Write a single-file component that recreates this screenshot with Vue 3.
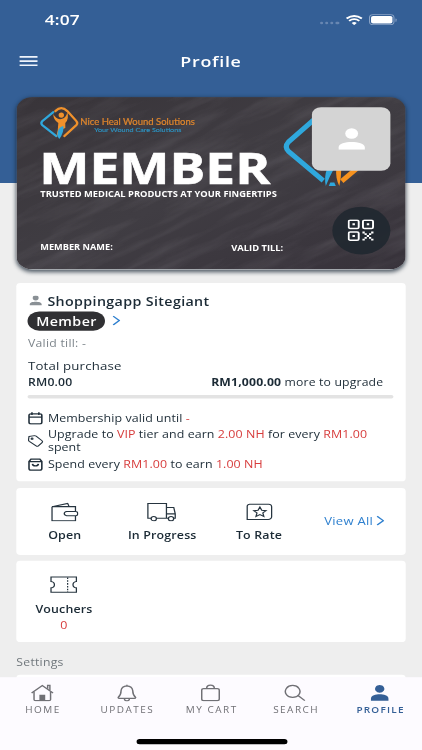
<template>
  <div class="viewport">
  <div class="screen">
    <header class="header">
      <div class="status-bar">
        <span class="time">4:07</span>
        <div class="status-icons">
          <span class="dots"><i v-for="n in 4" :key="n"></i></span>
          <svg class="wifi" viewBox="0 0 17 12" preserveAspectRatio="none">
            <path d="M8.5 12 L11 9.4 Q8.500 7.400 6 9.400Z" fill="#fff" />
            <path d="M3.500 6.900 Q8.500 2.900 13.500 6.900 M1 4.100 Q8.500 -1.900 16 4.100" fill="none" stroke="#fff" stroke-width="2.1" />
          </svg>
          <span class="battery"><i></i></span>
        </div>
      </div>
      <div class="title-bar">
        <svg class="menu" viewBox="0 0 18 12"><path d="M0 1h18 M0 6h18 M0 11h18" /></svg>
        <h1>Profile</h1>
      </div>
    </header>

    <section class="member-card">
      <svg class="card-art" viewBox="16 97 390 172" preserveAspectRatio="none">
        <defs>
          <linearGradient id="board" x1="0" y1="0" x2="1" y2="1">
            <stop offset="0" stop-color="#383439" />
            <stop offset="0.5" stop-color="#403d43" />
            <stop offset="1" stop-color="#37323a" />
          </linearGradient>
          <filter id="chalk" x="0" y="0" width="100%" height="100%">
            <feTurbulence type="fractalNoise" baseFrequency="0.012 0.09" numOctaves="5" seed="8" />
            <feColorMatrix values="0 0 0 0 0.8  0 0 0 0 0.78  0 0 0 0 0.84  0.9 0 0 0 -0.34" />
          </filter>
        </defs>
        <rect x="16" y="97" width="390" height="172" fill="url(#board)" />
        <g transform="rotate(-25 211 183)">
          <rect x="-20" y="-20" width="460" height="410" filter="url(#chalk)" opacity="0.2" />
        </g>

        <g fill="none" stroke-width="2.200" stroke-linecap="round" stroke-linejoin="round">
          <path d="M53 112 L42 121 Q40 123 42 125 L56 136" stroke="#2fa8dd" />
          <path d="M55 111 Q61 105 67 111 L76 121 Q78 123 76 125 L64 136" stroke="#f0912b" />
        </g>
        <circle cx="61" cy="115" r="2.700" fill="#f0912b" />
        <path d="M53 114 Q56 120 61 119 Q66 118 67 112 Q69 119 65 123 L65 128 Q60 129 56 137 Q58 129 58 123 Q53 120 53 114Z" fill="#f0912b" />
        <path d="M57 136 Q57 127 63 126 Q64 132 59 139Z" fill="#2fa8dd" />
        <g font-family="'Lato', 'Open Sans', sans-serif">
          <text x="80" y="124.900" font-size="8.800" font-weight="400" fill="#e0862c" stroke="#e0862c" stroke-width="0.2" textLength="114.500" lengthAdjust="spacingAndGlyphs">Nice Heal Wound Solutions</text>
          <text x="94" y="132.200" font-size="6.400" font-weight="400" fill="#2d93c2" stroke="#2d93c2" stroke-width="0.150" textLength="87" lengthAdjust="spacingAndGlyphs">Your Wound Care Solutions</text>
        </g>

        <path d="M320 114 L288 142 Q284 146.500 288 151 L323 180.500" fill="none" stroke="#2fa8dd" stroke-width="5" />
        <path d="M341.500 181 L370 157" fill="none" stroke="#f7921e" stroke-width="5" />
        <path d="M327 168 L334 168 Q329 177 325.500 186 Q323.500 177 327 168Z" fill="#2fa8dd" />
        <path d="M336 168 L341 168 Q341 178 339 186 Q335 178 336 168Z" fill="#f7921e" />
        <path d="M330 182.500 L334 182.500 L335.500 186 L328.500 186Z" fill="#2fa8dd" />

        <g font-family="'Open Sans', sans-serif" fill="#fff">
          <text x="39" y="183.500" font-size="42.500" font-weight="700" stroke="#fff" stroke-width="0.600" textLength="231" lengthAdjust="spacingAndGlyphs">MEMBER</text>
          <text x="40" y="196.500" font-size="8" font-weight="700" textLength="236.500" lengthAdjust="spacingAndGlyphs">TRUSTED MEDICAL PRODUCTS AT YOUR FINGERTIPS</text>
          <text x="40" y="249.500" font-size="8" font-weight="700" textLength="72.500" lengthAdjust="spacingAndGlyphs">MEMBER NAME:</text>
          <text x="231" y="250.500" font-size="8" font-weight="700" textLength="52" lengthAdjust="spacingAndGlyphs">VALID TILL:</text>
        </g>
      </svg>
      <div class="avatar">
        <svg viewBox="0 0 26 26"><circle cx="13" cy="6.500" r="6.300" /><path d="M0 26 V23 C0 18.500 7 16.500 13 16.500 S26 18.500 26 23 V26Z" /></svg>
      </div>
      <div class="qr">
        <svg viewBox="0 0 25 25">
          <g fill="none" stroke="#fff" stroke-width="1.800">
            <rect x="1" y="1" width="9.500" height="9.500" rx="1.500" />
            <rect x="14.500" y="1" width="9.500" height="9.500" rx="1.500" />
            <rect x="1" y="14.500" width="9.500" height="9.500" rx="1.500" />
          </g>
          <path fill="#fff" d="M4.600 4.600h2.300v2.300h-2.300z M18.100 4.600h2.300v2.300h-2.300z M4.600 18.100h2.300v2.300h-2.300z M14 14h2.200v2.200h-2.200z M22.200 14h2.200v2.200h-2.200z M18.100 18.100h2.200v2.200h-2.200z M14 22.200h2.200v2.200h-2.200z M22.200 22.200h2.200v2.200h-2.200z M16 16h2.100v2.100h-2.100z M20.200 16h2.100v2.100h-2.100z M16 20.200h2.100v2.100h-2.100z M20.200 20.200h2.100v2.100h-2.100z" />
        </svg>
      </div>
    </section>

    <section class="panel info">
      <div class="name-row">
        <svg class="person" viewBox="0 0 26 26"><circle cx="13" cy="6.500" r="6.300" /><path d="M0 26 V23 C0 18.500 7 16.500 13 16.500 S26 18.500 26 23 V26Z" /></svg>
        <span class="name">Shoppingapp Sitegiant</span>
      </div>
      <div class="tier-row">
        <span class="tier">Member</span>
        <svg class="chevron" viewBox="0 0 8 12"><path d="M1 0.700 L7 6 L1 11.300" /></svg>
      </div>
      <div class="valid">Valid till: -</div>
      <div class="total">Total purchase</div>
      <div class="amounts">
        <b class="spent">RM0.00</b>
        <span class="more"><b>RM1,000.00</b> more to upgrade</span>
      </div>
      <div class="progress"></div>
      <ul class="perks">
        <li>
          <svg viewBox="0 0 16 16"><path d="M3.500 2.500h9a2 2 0 0 1 2 2v8.500a2 2 0 0 1-2 2h-9a2 2 0 0 1-2-2V4.500a2 2 0 0 1 2-2z M1.500 6.500h13 M4.500 0.500v3.500 M11.500 0.500v3.500" /></svg>
          <span>Membership valid until <em>-</em></span>
        </li>
        <li class="double">
          <svg class="thin" viewBox="0 0 16 16"><path d="M1.500 2.500 L7 1.500 Q8 1.400 8.700 2 L14.700 7.800 Q15.800 9 14.700 10.200 L11 14.200 Q9.900 15.200 8.700 14.200 L1.800 8.500 Q1 7.800 1 6.800Z" /><circle cx="4.600" cy="5.200" r="0.900" /></svg>
          <span>Upgrade to <em>VIP</em> tier and earn <em>2.00 NH</em> for every <em>RM1.00</em><br>spent</span>
        </li>
        <li>
          <svg viewBox="0 0 16 16"><path d="M3.500 1.500h9l2 3v8.500a2 2 0 0 1-2 2h-9a2 2 0 0 1-2-2V4.500z M1.500 4.700h13 M5 7.500 Q5.300 10 8 10 T11 7.500" /></svg>
          <span>Spend every <em>RM1.00</em> to earn <em>1.00 NH</em></span>
        </li>
      </ul>
    </section>

    <section class="panel orders">
      <div class="cell">
        <svg class="icon" viewBox="0 0 28 24"><path d="M1 5.500h24v6 M25 17v6H1V5.500 M1 5.500 L17 1.500 L18.500 5.500 M16 11.500h9.500q1.800 0 1.800 2.700t-1.800 2.700H16q-2.500-0.500-2.500-2.700t2.500-2.700z" /></svg>
        <span>Open</span>
      </div>
      <div class="cell">
        <svg class="icon truck" viewBox="0 0 30 24"><path d="M4.300 20H1V1.500h19V20H9.700 M20 6.500h7.500l1.500 8v5.500h-1.500 M20 14.500h9 M22 20h-2" /><circle cx="7" cy="20.500" r="2.700" /><circle cx="24.700" cy="20.500" r="2.700" /></svg>
        <span>In Progress</span>
      </div>
      <div class="cell">
        <svg class="icon" viewBox="0 0 28 24"><path d="M4 2.500h19.500a3 3 0 0 1 3 3v12.500a3.500 3.500 0 0 1-3.500 3.500H1.500V5a2.500 2.500 0 0 1 2.500-2.500z M14.500 6l1.900 4 4.400.5-3.300 2.900 1 4.400-4-2.300-4 2.300 1-4.400-3.300-2.900 4.400-.5z" /></svg>
        <span>To Rate</span>
      </div>
      <div class="view-all">
        View All
        <svg class="chevron" viewBox="0 0 8 12"><path d="M1 0.700 L7 6 L1 11.300" /></svg>
      </div>
    </section>

    <section class="panel vouchers">
      <div class="cell">
        <svg class="icon" viewBox="0 0 28 24"><path d="M1 2.500h26v5.500q-3.500 0.500-3.500 4t3.500 4v5.500h-26v-5.500q3.500-0.500 3.500-4t-3.500-4z" /><path d="M18 3v18" stroke-dasharray="2 1.500" /></svg>
        <span>Vouchers</span>
        <em>0</em>
      </div>
    </section>

    <h2 class="settings-title">Settings</h2>
    <section class="panel settings"></section>

    <nav class="tabs">
      <div v-for="tab in tabs" :key="tab.label" class="tab" :class="{ active: tab.active }">
        <svg viewBox="0 0 24 22">
          <path v-for="(d, i) in tab.lines" :key="'l' + i" class="line" :d="d" />
          <path v-for="(d, i) in tab.fills" :key="'f' + i" class="fill" :d="d" />
        </svg>
        <span>{{ tab.label }}</span>
      </div>
      <div class="home-indicator"></div>
    </nav>
  </div>
  </div>
</template>

<script setup>
const tabs = [
  {
    label: 'HOME',
    lines: ['M1 11.500 L12 2 L23 11.500', 'M3.500 10v9.500q0 1.500 1.500 1.500h14q1.500 0 1.500-1.500V10', 'M17.500 6V2h2.300v6'],
    fills: ['M9 13.500h6v7.500H9z']
  },
  {
    label: 'UPDATES',
    lines: ['M12 2.500 Q6.500 3 6 8.500 C6 14 4.500 15.500 3 17 Q3 18.200 4.500 18.200H19.500Q21 18.200 21 17 C19.500 15.500 18 14 18 8.500 Q17.500 3 12 2.500z', 'M12 1v1.500', 'M9.500 19q0 2.300 2.500 2.300t2.500-2.300'],
    fills: []
  },
  {
    label: 'MY CART',
    lines: ['M5 6h14q2 0 2 2v11q0 2-2 2H5q-2 0-2-2V8q0-2 2-2z', 'M8 6q0-4.500 4-4.500t4 4.500'],
    fills: []
  },
  {
    label: 'SEARCH',
    lines: ['M9.500 2a7.500 7.500 0 1 0 0.010 0z', 'M15 14.500 L22 21'],
    fills: []
  },
  {
    label: 'PROFILE',
    active: true,
    lines: [],
    fills: ['M12 1.500a4.800 4.800 0 1 0 0.010 0z', 'M3 21 V18.500 C3 14.500 8 13 12 13 S21 14.500 21 18.500 V21z']
  }
]
</script>

<style>
body {
  overflow: hidden;
  background: #fdfbff;
}
</style>

<style scoped>
.viewport {
  width: 100%;
  height: 100vh;
  overflow: hidden;
}

.screen {
  box-sizing: border-box;
  width: 414px;
  height: 896px;
  overflow: hidden;
  position: relative;
  transform: scale(1.01932, 0.83705);
  transform-origin: 0 0;
  background: linear-gradient(#345f96 218.6px, #eee 218.6px);
  font-family: "Open Sans", sans-serif;
  color: #1b2a35;
}

svg {
  display: block;
  flex-shrink: 0;
}

em {
  font-style: normal;
  color: #d73c3c;
}

.header {
  height: 116px;
  color: #fff;
}

.status-bar {
  height: 47px;
  display: flex;
  justify-content: space-between;
  align-items: center;
  padding: 0 24.500px 0 44px;
}

.time {
  font-size: 17px;
  font-weight: 600;
  letter-spacing: 0.1px;
}

.status-icons {
  display: flex;
  align-items: center;
}

.dots {
  display: flex;
  gap: 1.600px;
  margin: 8px 6px 0 0;
}

.dots i {
  width: 3.500px;
  height: 3.500px;
  border-radius: 50%;
  background: #6887b2;
}

.wifi {
  width: 17px;
  height: 12px;
}

.battery {
  position: relative;
  box-sizing: border-box;
  width: 25px;
  height: 13px;
  margin: 0 3px 0 6px;
  padding: 1px;
  border: 1px solid #8ba4c6;
  border-radius: 4px;
}

.battery i {
  display: block;
  width: 21px;
  height: 9px;
  border-radius: 2px;
  background: #fff;
}

.battery::after {
  content: "";
  position: absolute;
  left: 25px;
  top: 3.500px;
  width: 1.500px;
  height: 4px;
  border-radius: 0 2px 2px 0;
  background: #8ba4c6;
}

.title-bar {
  display: grid;
  grid-template-columns: 60px 1fr 60px;
  align-items: center;
  height: 51px;
  text-align: center;
}

.title-bar h1 {
  margin: 0;
  font-size: 17.500px;
  font-weight: 600;
  letter-spacing: 0.700px;
}

.menu {
  width: 18px;
  height: 12px;
  margin: 1px 0 0 18.500px;
  fill: none;
  stroke: #eef4fc;
  stroke-width: 1.900;
}

.member-card {
  position: relative;
  width: 382.6px;
  height: 205.5px;
  margin-left: 15.7px;
  border-radius: 16px;
  overflow: hidden;
  box-shadow: 0 2px 5px rgba(20, 35, 50, 0.75);
}

.card-art {
  width: 100%;
  height: 100%;
}

.avatar {
  position: absolute;
  right: 15.500px;
  top: 11.500px;
  width: 76.500px;
  height: 76.500px;
  border-radius: 9px;
  background: #d4d4d4;
  display: flex;
  align-items: center;
  justify-content: center;
}

.avatar svg {
  width: 26px;
  height: 26px;
  fill: #fff;
}

.qr {
  position: absolute;
  right: 15.500px;
  bottom: 18px;
  width: 57px;
  height: 57px;
  border-radius: 50%;
  background: rgba(33, 40, 48, 0.92);
  display: flex;
  align-items: center;
  justify-content: center;
}

.qr svg {
  width: 26px;
  height: 26px;
}

.panel {
  box-sizing: border-box;
  width: 382.6px;
  margin-left: 15.7px;
  background: #fff;
  border-radius: 4px;
}

.info {
  height: 236.500px;
  margin-top: 16.500px;
  padding: 10px 11.800px 0;
}

.name-row {
  display: flex;
  align-items: center;
  height: 22px;
}

.person {
  width: 12px;
  height: 12px;
  margin: 0 5px 0 2px;
  fill: #8a9095;
}

.name {
  font-size: 14px;
  font-weight: 600;
  letter-spacing: 0.350px;
}

.tier-row {
  display: flex;
  align-items: center;
  height: 26.500px;
}

.tier {
  width: 75.500px;
  height: 23px;
  line-height: 23px;
  border-radius: 12px;
  background: #303033;
  color: #fff;
  text-align: center;
  font-size: 14px;
  font-weight: 600;
  letter-spacing: 0.400px;
}

.chevron {
  width: 8px;
  height: 12px;
  fill: none;
  stroke: #2f80cf;
  stroke-width: 1.500;
}

.tier-row .chevron {
  margin-left: 7.500px;
}

.valid {
  line-height: 26px;
  font-size: 12px;
  letter-spacing: 0.250px;
  color: #7d858b;
}

.total {
  margin-top: 5px;
  line-height: 18px;
  font-size: 13px;
  letter-spacing: 0.150px;
}

.amounts {
  display: flex;
  justify-content: space-between;
  padding-right: 10.500px;
  line-height: 21px;
  font-size: 12px;
  letter-spacing: 0.150px;
}

.amounts b {
  font-weight: 700;
}

.amounts .spent {
  font-weight: 600;
}

.progress {
  height: 4px;
  margin-top: 5px;
  border-radius: 2px;
  background: #e3e3e3;
}

.perks {
  list-style: none;
  margin: 14px 0 0;
  padding: 0;
  font-size: 12.200px;
  letter-spacing: 0.070px;
}

.perks li {
  display: flex;
  align-items: center;
  gap: 4px;
  line-height: 19.500px;
  white-space: nowrap;
}

.perks .double {
  line-height: 16.300px;
  padding: 1.500px 0 2px;
}

.perks svg {
  width: 15.500px;
  height: 15.500px;
  fill: none;
  stroke: #22303b;
  stroke-width: 1.600;
}

.perks .thin {
  stroke-width: 1.200;
}

.orders {
  display: grid;
  grid-template-columns: repeat(4, 1fr);
  height: 80px;
  margin-top: 8px;
}

.cell {
  display: flex;
  flex-direction: column;
  align-items: center;
  padding-top: 17px;
  font-size: 12.200px;
  font-weight: 600;
  letter-spacing: 0.150px;
}

.icon {
  width: 27px;
  height: 23px;
  fill: none;
  stroke: #26343f;
  stroke-width: 1.300;
}

.icon.truck {
  width: 29px;
  margin-right: 2px;
}

.orders .cell:nth-child(3) {
  padding-right: 1.500px;
}

.cell span {
  margin-top: 7.500px;
  line-height: 20px;
}

.cell em {
  font-weight: 400;
  line-height: 17px;
}

.view-all {
  display: flex;
  align-items: center;
  gap: 3px;
  padding: 0 0 2px 15.500px;
  font-size: 12.800px;
  letter-spacing: 0.250px;
  color: #2f80cf;
}

.vouchers {
  display: grid;
  grid-template-columns: repeat(4, 1fr);
  height: 97px;
  margin-top: 7.500px;
}

.vouchers .cell {
  padding-right: 1.500px;
}

.settings-title {
  margin: 15px 0 4px 16px;
  line-height: 20px;
  font-size: 12px;
  font-weight: 400;
  letter-spacing: 0.250px;
  color: #70777c;
}

.settings {
  height: 60px;
}

.tabs {
  position: absolute;
  left: 0;
  right: 0;
  bottom: 0;
  height: 87px;
  display: grid;
  grid-template-columns: repeat(5, 1fr);
  background: #fdfbff;
}

.tab {
  display: flex;
  flex-direction: column;
  align-items: center;
  padding-top: 8px;
  color: #707075;
  font-size: 9.800px;
  letter-spacing: 1.450px;
  white-space: nowrap;
}

.tab svg {
  width: 23px;
  height: 21px;
}

.tab span {
  margin-top: 3.500px;
  line-height: 13px;
  margin-right: -1.500px;
}

.line {
  fill: none;
  stroke: currentColor;
  stroke-width: 1.500;
}

.fill {
  fill: currentColor;
}

.tab.active {
  color: #345f96;
  font-weight: 600;
  letter-spacing: 1.200px;
}

.home-indicator {
  position: absolute;
  left: 133.500px;
  bottom: 7.500px;
  width: 148px;
  height: 5.500px;
  border-radius: 3px;
  background: #000;
}
</style>
